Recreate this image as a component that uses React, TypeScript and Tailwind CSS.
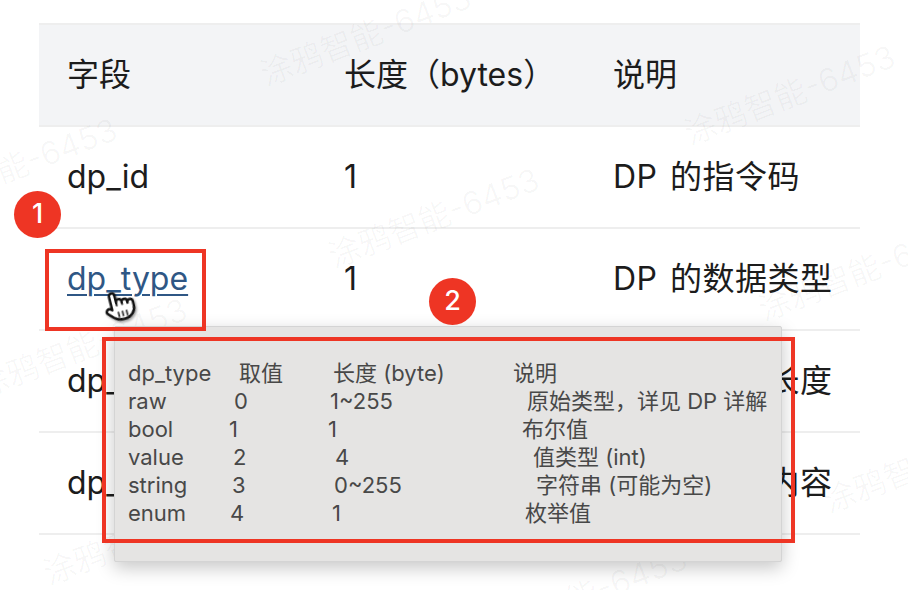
const fontStack = "font-['Inter','Noto_Sans_CJK_SC',sans-serif]";

const rows = [
  { field: "dp_id", len: "1", desc: "DP 的指令码" },
  { field: "dp_type", len: "1", desc: "DP 的数据类型", link: true },
  { field: "dp_len", len: "2", desc: "DP 的数据长度" },
  { field: "dp_value", len: "n", desc: "DP 的数据内容" },
];

// column offsets differ per line in the original, it was typed with spaces
const tipRows = [
  { a: "dp_type", b: "取值", c: "长度 (byte)", d: "说明", w1: "w-[111px]", w2: "w-[94px]", w3: "w-[180px]" },
  { a: "raw", b: "0", c: "1~255", d: "原始类型，详见 DP 详解", w1: "w-[106px]", w2: "w-[96px]", w3: "w-[197px]" },
  { a: "bool", b: "1", c: "1", d: "布尔值", w1: "w-[101px]", w2: "w-[99px]", w3: "w-[194px]" },
  { a: "value", b: "2", c: "4", d: "值类型 (int)", w1: "w-[105px]", w2: "w-[102px]", w3: "w-[198px]" },
  { a: "string", b: "3", c: "0~255", d: "字符串 (可能为空)", w1: "w-[104px]", w2: "w-[102px]", w3: "w-[202px]" },
  { a: "enum", b: "4", c: "1", d: "枚举值", w1: "w-[102px]", w2: "w-[102px]", w3: "w-[193px]" },
];

const marks = [
  "left-[262px] top-[52px]",
  "left-[-92px] top-[184px]",
  "left-[330px] top-[234px]",
  "left-[686px] top-[111px]",
  "left-[760px] top-[287px]",
  "left-[-22px] top-[364px]",
  "left-[45px] top-[551px]",
  "left-[478px] top-[613px]",
  "left-[825px] top-[479px]",
];

const HandCursor = () => (
  <svg
    viewBox="0 0 24 26"
    className="absolute left-[102px] top-[289px] w-[36px] h-[36px] -rotate-[14deg] drop-shadow-[1px_2px_1px_rgba(0,0,0,0.35)]"
  >
    <path
      d="M6 14V4a2 2 0 0 1 4 0v5.5a2 2 0 0 1 4-.5v1a2 2 0 0 1 4 0v1a2 2 0 1 1 4 0v3a8 8 0 0 1-8 8h-2c-2.8 0-4.5-.86-6-2.34l-3.6-3.6a2 2 0 0 1 2.83-2.82L6 14z"
      fill="#fff"
      stroke="#111"
      strokeWidth="1.8"
      strokeLinejoin="round"
    />
    <path d="M10 16v4M13 16v4M16 16v4" stroke="#333" strokeWidth="1.3" fill="none" />
    <path d="M10 9.5V12M14 10v2M18 11v1" stroke="#111" strokeWidth="1.3" fill="none" />
  </svg>
);

export default function App() {
  return (
    <div className={`relative w-[908px] h-[590px] overflow-hidden bg-white ${fontStack}`}>
      <div className="pt-[23px] pl-[39px]">
        <table className="w-[821px] table-fixed border-collapse text-[32px] text-[#1c1c1c]">
          <colgroup>
            <col className="w-[277px]" />
            <col className="w-[269px]" />
            <col />
          </colgroup>
          <thead>
            <tr className="h-[102px] bg-[#f3f4f6] border-y-2 border-[#eeeeee] text-left">
              <th className="pl-[28px] font-normal">字段</th>
              <th className="pl-[28px] font-normal">长度（bytes）</th>
              <th className="pl-[28px] font-normal">说明</th>
            </tr>
          </thead>
          <tbody>
            {rows.map((row) => (
              <tr key={row.field} className="h-[102px] border-b-2 border-[#eeeeee]">
                <td className="pl-[28px]">
                  {row.link ? (
                    <a className="text-[#2f5785] underline decoration-2 underline-offset-4">{row.field}</a>
                  ) : (
                    row.field
                  )}
                </td>
                <td className="pl-[28px]">{row.len}</td>
                <td className="pl-[28px] whitespace-nowrap tracking-[0.5px] [word-spacing:3px]">{row.desc}</td>
              </tr>
            ))}
          </tbody>
        </table>
      </div>

      {/* watermark */}
      {marks.map((pos) => (
        <div
          key={pos}
          className={`absolute ${pos} -rotate-[21deg] origin-left text-[32px] whitespace-nowrap text-[#000000]/[0.03] pointer-events-none`}
        >
          涂鸦智能-6453
        </div>
      ))}

      {/* hover popup */}
      <div className="absolute left-[114px] top-[326px] w-[668px] h-[236px] pt-[32px] pl-[13px] bg-[#e5e4e3] border border-[#d4d4d4] rounded-[2px] shadow-[0_6px_18px_rgba(0,0,0,0.22)] text-[22px] leading-[28px] text-[#484848]">
        {tipRows.map((r) => (
          <div key={r.a} className="flex whitespace-nowrap">
            <span className={r.w1}>{r.a}</span>
            <span className={r.w2}>{r.b}</span>
            <span className={r.w3}>{r.c}</span>
            <span>{r.d}</span>
          </div>
        ))}
      </div>

      <HandCursor />

      {/* annotations */}
      <div className="absolute left-[45px] top-[249px] w-[161px] h-[82px] border-4 border-[#ee3524]" />
      <div className="absolute left-[102px] top-[337px] w-[693px] h-[206px] border-4 border-[#ee3524]" />
      <div className="absolute left-[14px] top-[191px] w-[47px] h-[47px] rounded-full bg-[#ee3524] flex items-center justify-center text-white text-[27px] font-medium">
        1
      </div>
      <div className="absolute left-[429px] top-[278px] w-[47px] h-[47px] rounded-full bg-[#ee3524] flex items-center justify-center text-white text-[27px] font-medium">
        2
      </div>
    </div>
  );
}
